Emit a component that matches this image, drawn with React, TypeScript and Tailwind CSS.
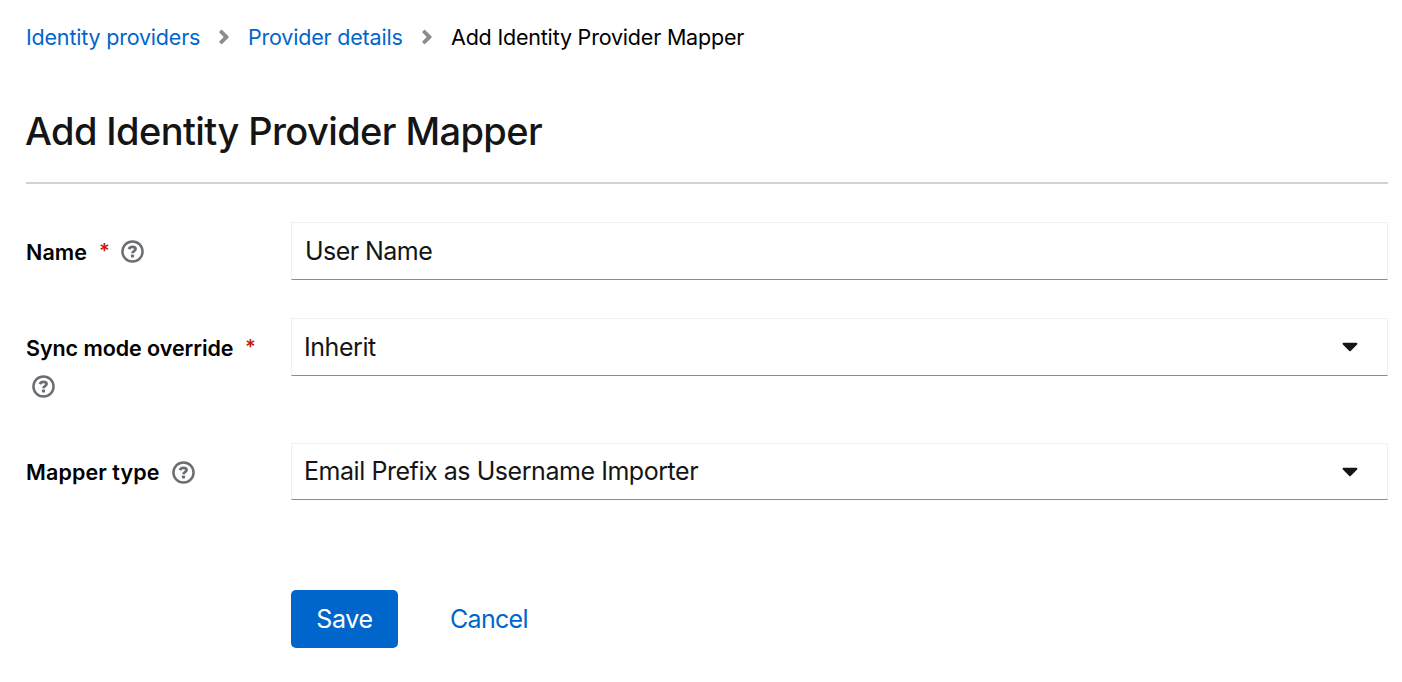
import { FaAngleRight, FaCaretDown } from "react-icons/fa";

function HelpButton({ label }: { label: string }) {
  return (
    <button type="button" aria-label={`Help for ${label}`} className="flex">
      <svg viewBox="0 0 24 24" className="size-[23px] shrink-0" fill="none" aria-hidden="true">
        <circle cx="12" cy="12" r="10.5" stroke="#6a6e73" strokeWidth="2.6" />
        <path
          d="M8.2 9.5C8.9 7.9 10.2 7.1 12 7.1c2 0 3.2 1 3.2 2.4 0 2-3.2 2.1-3.2 4.2"
          stroke="#6a6e73"
          strokeWidth="2.9"
        />
        <rect x="10.4" y="15.1" width="3.2" height="3.1" rx="0.7" fill="#6a6e73" />
      </svg>
    </button>
  );
}

function Required() {
  return (
    <span className="text-[20px] leading-none font-semibold text-[#c9190b]" aria-hidden="true">
      *
    </span>
  );
}

function BreadcrumbDivider() {
  return (
    <FaAngleRight
      size={22}
      stroke="currentColor"
      strokeWidth={14}
      className="mx-[13px] w-[22px] text-[#8a8d90]"
    />
  );
}

function Select({ value }: { value: string }) {
  return (
    <button
      type="button"
      className="flex h-full w-full items-center justify-between border border-[#f0f0f0] border-b-[#8a8d90] pr-[29px] pl-3 text-left text-[25px] text-[#151515]"
    >
      <span className="pt-px tracking-[-0.45px]">{value}</span>
      <FaCaretDown size={26} className="mb-0.5 w-4" />
    </button>
  );
}

export default function App() {
  return (
    <main className="h-[682px] w-[1402px] overflow-hidden bg-white pr-[14px] pl-[26px] font-['Inter',sans-serif] text-black">
      {/* Breadcrumb */}
      <nav className="flex h-[74px] items-center text-[21.5px] tracking-[-0.2px] whitespace-nowrap">
        <a href="#" className="w-[174px] text-[#0066cc]">
          Identity providers
        </a>
        <BreadcrumbDivider />
        <a href="#" className="w-[155px] text-[#0066cc]">
          Provider details
        </a>
        <BreadcrumbDivider />
        <span>Add Identity Provider Mapper</span>
      </nav>

      {/* Title */}
      <div className="flex h-[110px] items-center border-b-2 border-[#d2d2d2] pt-[7px]">
        <h1 className="-ml-px text-[38px] font-medium tracking-[-0.6px] whitespace-nowrap text-[#151515]">
          Add Identity Provider Mapper
        </h1>
      </div>

      <form className="mt-[38px]">
        <div className="flex h-[58px]">
          <div className="flex w-[265px] items-center">
            <label htmlFor="name" className="w-[73px] pt-0.5 text-[21.5px] font-semibold tracking-[0.1px]">
              Name
            </label>
            <Required />
            <span className="ml-[11px]">
              <HelpButton label="Name" />
            </span>
          </div>
          <input
            id="name"
            defaultValue="User Name"
            className="flex-1 border border-[#f0f0f0] border-b-[#8a8d90] px-[13px] pt-0.5 text-[25px] tracking-[-0.55px] text-[#151515] outline-none"
          />
        </div>

        <div className="mt-[38px] flex h-[87px]">
          <div className="w-[265px]">
            <div className="flex h-[58px] items-center">
              <label className="w-[219px] pt-0.5 text-[21.5px] font-semibold tracking-[-0.06px] whitespace-nowrap">
                Sync mode override
              </label>
              <Required />
            </div>
            <div className="-mt-px ml-[6px]">
              <HelpButton label="Sync mode override" />
            </div>
          </div>
          <div className="h-[58px] flex-1">
            <Select value="Inherit" />
          </div>
        </div>

        <div className="mt-[38px] flex h-[57px]">
          <div className="flex w-[265px] items-center pt-px">
            <label className="w-[146px] pt-px text-[21.5px] font-semibold tracking-[0.1px]">
              Mapper type
            </label>
            <HelpButton label="Mapper type" />
          </div>
          <div className="flex-1">
            <Select value="Email Prefix as Username Importer" />
          </div>
        </div>

        {/* Actions */}
        <div className="mt-[90px] ml-[265px] flex h-[58px] text-[25px]">
          <button type="submit" className="w-[107px] rounded-[5px] bg-[#0066cc] pt-0.5 tracking-[-0.3px] text-white">
            Save
          </button>
          <button type="button" className="ml-[52px] pt-0.5 tracking-[-0.7px] text-[#0066cc]">
            Cancel
          </button>
        </div>
      </form>
    </main>
  );
}
